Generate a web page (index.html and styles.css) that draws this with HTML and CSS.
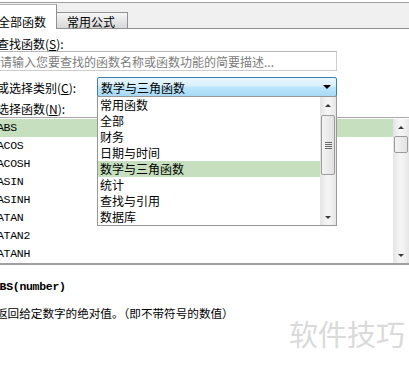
FILE: index.html
```html
<!DOCTYPE html>
<html lang="zh-CN">
<head>
	<meta charset="UTF-8">
	<meta name="viewport" content="width=device-width, initial-scale=1.0">
	<title>插入函数</title>
	<link rel="stylesheet" href="styles.css">
</head>
<body>

<div class="dialog">
	<div class="tabs">
		<div class="tab active">全部函数</div>
		<div class="tab">常用公式</div>
	</div>

	<div class="field-label">查找函数(<u>S</u>):</div>
	<input class="search" type="text" placeholder="请输入您要查找的函数名称或函数功能的简要描述...">

	<div class="category-row">
		<span class="row-label">或选择类别(<u>C</u>):</span>
		<div class="select-wrap">
			<div class="select">
				<span>数学与三角函数</span>
				<span class="select-arrow"></span>
			</div>
			<!-- open dropdown popup -->
			<div class="dropdown">
				<ul class="dropdown-items">
					<li>常用函数</li>
					<li>全部</li>
					<li>财务</li>
					<li>日期与时间</li>
					<li class="selected">数学与三角函数</li>
					<li>统计</li>
					<li>查找与引用</li>
					<li>数据库</li>
				</ul>
				<div class="scrollbar">
					<div class="sb-btn"><span class="arr-up"></span></div>
					<div class="sb-track drop-track">
						<div class="sb-thumb drop-thumb"><span class="grip"></span></div>
					</div>
					<div class="sb-btn"><span class="arr-down"></span></div>
				</div>
			</div>
		</div>
	</div>

	<div class="field-label list-label">选择函数(<u>N</u>):</div>
	<div class="func-list">
		<div class="func-rows">
			<div class="func-row selected">ABS</div>
			<div class="func-row">ACOS</div>
			<div class="func-row">ACOSH</div>
			<div class="func-row">ASIN</div>
			<div class="func-row">ASINH</div>
			<div class="func-row">ATAN</div>
			<div class="func-row">ATAN2</div>
			<div class="func-row">ATANH</div>
		</div>
		<div class="scrollbar">
			<div class="sb-btn"><span class="arr-up"></span></div>
			<div class="sb-track func-track">
				<div class="sb-thumb func-thumb"></div>
			</div>
			<div class="sb-btn"><span class="arr-down"></span></div>
		</div>
	</div>

	<div class="syntax">ABS(number)</div>
	<div class="desc">返回给定数字的绝对值。（即不带符号的数值）</div>

	<div class="watermark">软件技巧</div>
</div>

</body>
</html>
```

FILE: styles.css
```css
* {
	box-sizing: border-box;
}
body {
	margin: 0;
	font-family: "Noto Sans CJK SC", "Noto Sans", sans-serif;
	font-size: 12px;
	color: #000;
	background: #fff;
	overflow: hidden;
}
.dialog {
	position: relative;
	margin-left: -3px;
	width: 412px;
	height: 366px;
	overflow: hidden;
}

/* tabs */
.tabs {
	margin-top: 2px;
	height: 27px;
	border-top: 1px solid #a0a0a0;
	border-bottom: 1px solid #919191;
	background: #f0f0f0;
	display: flex;
	align-items: flex-end;
}
.tab {
	width: 71px;
	height: 16px;
	line-height: 18px;
	padding-left: 10px;
	border: 1px solid #919191;
	border-left: none;
	border-bottom: none;
	background: linear-gradient(#f7f7f7, #e6e6e6 50%, #d8d8d8);
}
.tab.active {
	width: 60px;
	height: 25px;
	margin-bottom: -1px;
	padding-top: 9px;
	padding-left: 1px;
	line-height: 16px;
	border-top-color: #b4b4b4;
	background: #fff;
}

/* fields */
.field-label {
	margin-top: 8px;
	line-height: 14px;
}
.search {
	display: block;
	width: 340px;
	height: 20px;
	margin: 0;
	padding: 0 2px;
	border: 1px solid #cdcdcd;
	border-top-color: #b5b5b5;
	font-family: inherit;
	font-size: 12px;
	outline: none;
}
.search::placeholder {
	color: #7c7c7c;
}
.category-row {
	display: flex;
	align-items: center;
	margin-top: 6px;
}
.row-label {
	width: 100px;
}
.select-wrap {
	position: relative;
	width: 240px;
}
.select {
	height: 20px;
	display: flex;
	justify-content: space-between;
	align-items: center;
	padding: 0 5px 0 3px;
	border: 1px solid #3c7fb1;
	border-radius: 2px;
	background: linear-gradient(#eaf6fd, #d9f0fc 45%, #bee6fd 50%, #a7d9f5);
}
.select-arrow {
	width: 0;
	height: 0;
	border-left: 4px solid transparent;
	border-right: 4px solid transparent;
	border-top: 4px solid #000;
}
.dropdown {
	position: absolute;
	top: 19px;
	left: 0;
	width: 240px;
	height: 130px;
	display: flex;
	border: 1px solid #979797;
	background: #fff;
	z-index: 2;
}
.dropdown-items {
	flex: 1;
	list-style: none;
	margin: 0;
	padding: 0;
}
.dropdown-items li {
	height: 16px;
	line-height: 16px;
	padding-left: 2px;
}
.dropdown-items li.selected,
.func-row.selected {
	background: #c6dfbe;
}

.list-label {
	margin-top: 4px;
	line-height: 16px;
}

/* function list */
.func-list {
	display: flex;
	height: 148px;
	padding-top: 1px;
	border-top: 1px solid #a8a8a8;
	border-bottom: 2px solid #a0a0a0;
}
.func-rows {
	flex: 1;
}
.func-row {
	height: 18px;
	line-height: 18px;
	font-family: "Liberation Mono", monospace;
	font-size: 11.5px;
	letter-spacing: -0.3px;
}

/* scrollbars */
.scrollbar {
	width: 16px;
	display: flex;
	flex-direction: column;
	background: linear-gradient(to right, #e4e4e4, #f4f4f4 40%, #f4f4f4 60%, #e6e6e6);
}
.sb-btn {
	flex: none;
	height: 16px;
	display: flex;
	align-items: center;
	justify-content: center;
}
.sb-track {
	flex: 1;
}
.sb-thumb {
	margin: 0 1px;
	border: 1px solid #9b9b9b;
	border-radius: 2px;
	background: linear-gradient(to right, #f4f4f4, #e2e2e2);
	display: flex;
	align-items: center;
	justify-content: center;
}
.drop-track {
	padding-top: 2px;
}
.drop-thumb {
	height: 60px;
}
.func-track {
	padding-top: 1px;
}
.func-thumb {
	height: 17px;
}
.grip {
	width: 7px;
	height: 7px;
	background: repeating-linear-gradient(#6a6a6a 0, #6a6a6a 1px, transparent 1px, transparent 2px);
}
.arr-up {
	width: 0;
	height: 0;
	border-left: 3px solid transparent;
	border-right: 3px solid transparent;
	border-bottom: 3px solid #3a3a3a;
}
.arr-down {
	width: 0;
	height: 0;
	border-left: 3px solid transparent;
	border-right: 3px solid transparent;
	border-top: 3px solid #3a3a3a;
}

/* description */
.syntax {
	margin-top: 12px;
	margin-left: -4px;
	line-height: 20px;
	font-family: "Liberation Mono", monospace;
	font-size: 11.5px;
	font-weight: bold;
	letter-spacing: -0.3px;
}
.desc {
	margin-top: 6px;
	margin-left: -1px;
	line-height: 20px;
	font-size: 11.6px;
}
.watermark {
	position: absolute;
	right: 4px;
	top: 319px;
	font-size: 29px;
	line-height: 29px;
	color: #dadada;
}
```
